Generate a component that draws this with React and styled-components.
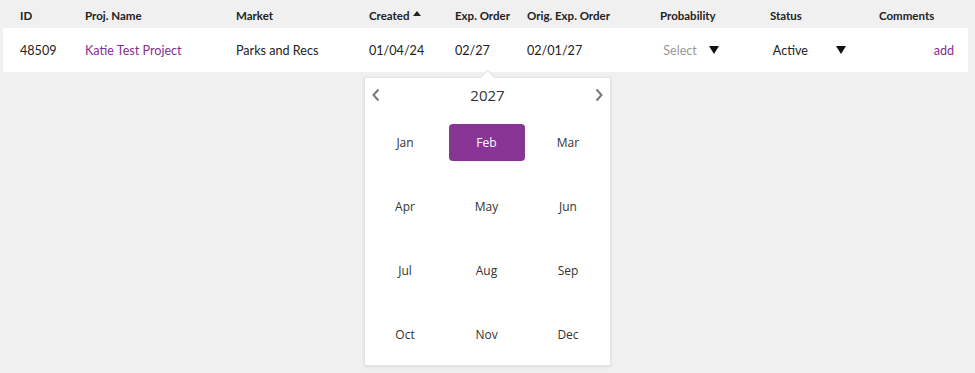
import React from "react";
import styled, { createGlobalStyle } from "styled-components";

const Global = createGlobalStyle`
  html, body { margin: 0; padding: 0; background: #f0f0f0; }
  body { font-family: Lato, "Liberation Sans", sans-serif; }
`;

const Page = styled.div`
  width: 975px;
  height: 373px;
  background: #f0f0f0;
  padding: 0 7px 0 3px;
  box-sizing: border-box;
`;

const COLS = "17px 65px 151px 133px 86px 72px 133px 110px 109px 1fr";

const HeaderRow = styled.div`
  display: grid;
  grid-template-columns: ${COLS};
  height: 28px;
  align-items: center;
  padding-top: 2px;
  box-sizing: border-box;
`;

const HeadCell = styled.div`
  font-size: 11.5px;
  font-weight: 700;
  color: #222;
  white-space: nowrap;
  display: flex;
  align-items: center;
  gap: 3px;
`;

const SortUp = styled.span`
  display: inline-block;
  width: 0;
  height: 0;
  border-left: 4px solid transparent;
  border-right: 4px solid transparent;
  border-bottom: 5px solid #222;
  margin-bottom: 3px;
`;

const DataRow = styled.div`
  display: grid;
  grid-template-columns: ${COLS};
  height: 44px;
  align-items: center;
  background: #fff;
`;

const Cell = styled.div`
  font-size: 12.6px;
  color: ${(p) => (p.$muted ? "#9a9a9a" : p.$link ? "#83308f" : "#222")};
  white-space: nowrap;
  display: flex;
  align-items: center;
  justify-content: ${(p) => (p.$right ? "flex-end" : "flex-start")};
  padding-right: ${(p) => (p.$right ? "14px" : "0")};
  position: relative;
`;

const Caret = styled.span`
  display: inline-block;
  width: 0;
  height: 0;
  border-left: 5px solid transparent;
  border-right: 5px solid transparent;
  border-top: 8px solid #111;
  margin-left: ${(p) => p.$gap}px;
`;

const Popup = styled.div`
  position: absolute;
  left: -91px;
  top: 34px;
  width: 247px;
  height: 289px;
  background: #fff;
  border: 1px solid #e2e2e2;
  box-shadow: 0 1px 3px rgba(0, 0, 0, 0.08);
  box-sizing: border-box;
  font-family: "Open Sans", "Noto Sans", sans-serif;
  z-index: 5;
`;

const Pointer = styled.div`
  position: absolute;
  top: -6px;
  left: 117px;
  width: 10px;
  height: 10px;
  background: #fff;
  border-left: 1px solid #e2e2e2;
  border-top: 1px solid #e2e2e2;
  transform: rotate(45deg);
`;

const CalHeader = styled.div`
  display: flex;
  align-items: center;
  justify-content: space-between;
  height: 34px;
  padding: 0 5px 0 5px;
  position: relative;
`;

const Year = styled.div`
  font-size: 15px;
  color: #333;
`;

const Chevron = styled.svg`
  width: 12px;
  height: 14px;
`;

const MonthGrid = styled.div`
  display: grid;
  grid-template-columns: repeat(3, 76px);
  grid-auto-rows: 37px;
  column-gap: 5.5px;
  row-gap: 27px;
  padding: 12px 4px 0 2px;
`;

const Month = styled.div`
  display: flex;
  align-items: center;
  justify-content: center;
  font-size: 12px;
  border-radius: 4px;
  color: ${(p) => (p.$active ? "#fff" : "#333")};
  background: ${(p) => (p.$active ? "#883596" : "transparent")};
`;

const months = ["Jan", "Feb", "Mar", "Apr", "May", "Jun", "Jul", "Aug", "Sep", "Oct", "Nov", "Dec"];

function ChevronIcon({ dir }) {
  const d = dir === "left" ? "M8.5 1.5 L3.5 7 L8.5 12.5" : "M3.5 1.5 L8.5 7 L3.5 12.5";
  return (
    <Chevron viewBox="0 0 12 14">
      <path d={d} fill="none" stroke="#777" strokeWidth="2" />
    </Chevron>
  );
}

export default function App() {
  return (
    <Page>
      <Global />
      <HeaderRow>
        <span />
        <HeadCell>ID</HeadCell>
        <HeadCell>Proj. Name</HeadCell>
        <HeadCell>Market</HeadCell>
        <HeadCell>
          Created <SortUp />
        </HeadCell>
        <HeadCell>Exp. Order</HeadCell>
        <HeadCell>Orig. Exp. Order</HeadCell>
        <HeadCell>Probability</HeadCell>
        <HeadCell>Status</HeadCell>
        <HeadCell>Comments</HeadCell>
      </HeaderRow>
      <DataRow>
        <span />
        <Cell>48509</Cell>
        <Cell $link>Katie Test Project</Cell>
        <Cell>Parks and Recs</Cell>
        <Cell>01/04/24</Cell>
        <Cell>
          02/27
          <Popup>
            <Pointer />
            <CalHeader>
              <ChevronIcon dir="left" />
              <Year>2027</Year>
              <ChevronIcon dir="right" />
            </CalHeader>
            <MonthGrid>
              {months.map((m) => (
                <Month key={m} $active={m === "Feb"}>
                  {m}
                </Month>
              ))}
            </MonthGrid>
          </Popup>
        </Cell>
        <Cell>02/01/27</Cell>
        <Cell $muted>
          &nbsp;Select
          <Caret $gap={12} />
        </Cell>
        <Cell>
          &nbsp;Active
          <Caret $gap={28} />
        </Cell>
        <Cell $link $right>add</Cell>
      </DataRow>
    </Page>
  );
}
